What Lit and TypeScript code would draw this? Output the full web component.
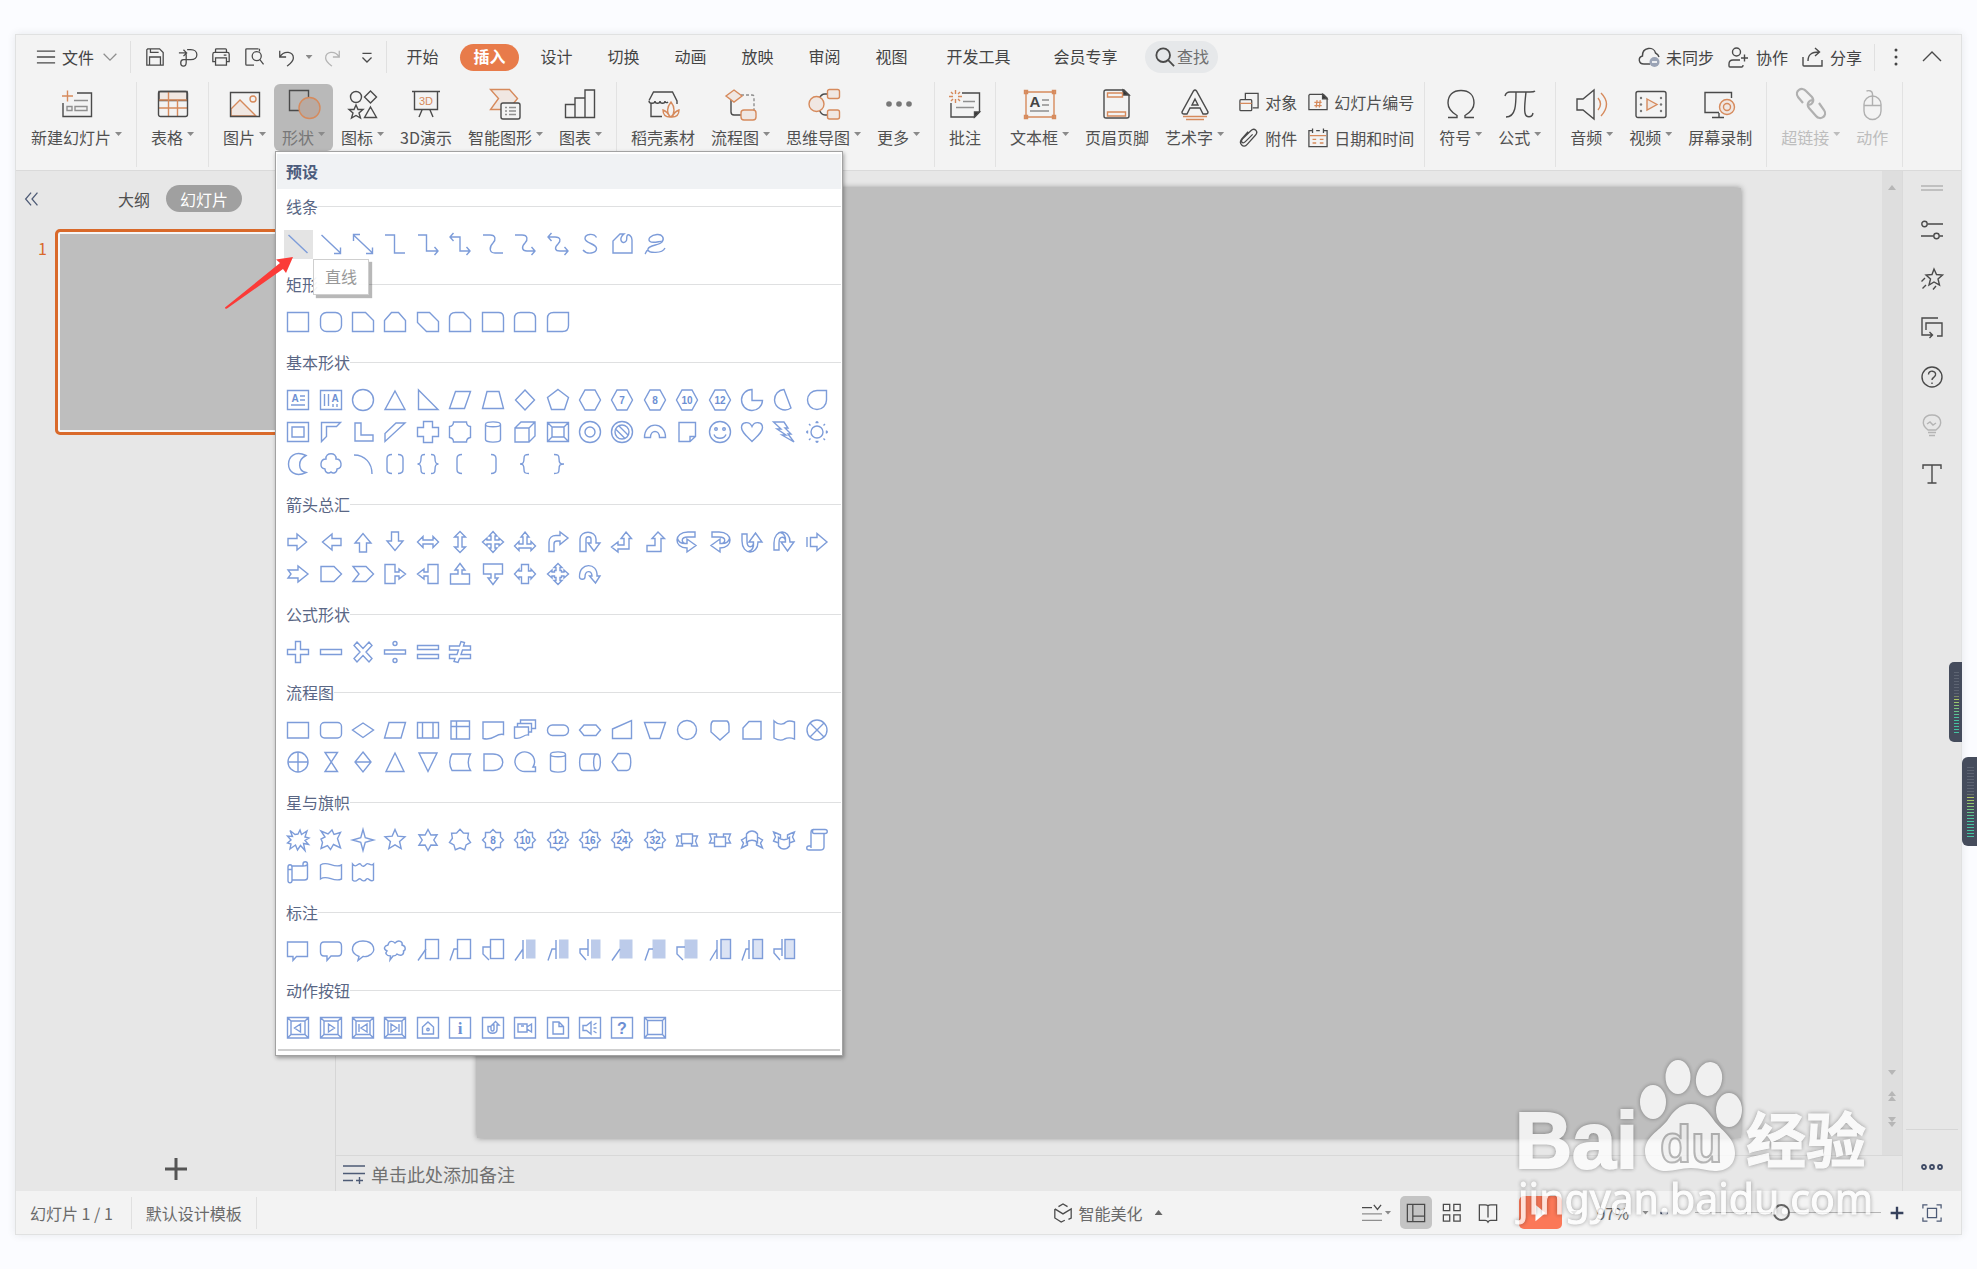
import { LitElement, html, svg, css, nothing } from "lit";
import type { TemplateResult, SVGTemplateResult } from "lit";
import { customElement, property } from "lit/decorators.js";
import { classMap } from "lit/directives/class-map.js";

type Art = SVGTemplateResult;

/* ---------- shape gallery drawings, on a 24 unit grid ---------- */

const p = (d: string): Art => svg`<path d=${d}></path>`;
const turn = (d: string, deg: number): Art => svg`<path d=${d} transform=${`rotate(${deg} 12 12)`}></path>`;
const via = (d: string, transform: string): Art => svg`<path d=${d} transform=${transform}></path>`;
const num = (d: string, n: string): Art =>
  svg`<path d=${d}></path><text x="12" y="15.5" text-anchor="middle" font-size="10">${n}</text>`;

const BOX = "M1.5 2.5h21v19h-21z";
const HEX = "M7 2h10l5.5 10L17 22H7L1.5 12z";
const BADGE = "M12 1.5l3 3h4.5v4.5l3 3-3 3v4.5H15l-3 3-3-3H4.5V15l-3-3 3-3V4.5H9z";
const ARROW = "M2 8.5h9V4l9.5 8L11 20v-4.5H2z";
const DOUBLE = "M1.5 12L7 6.5V10h10V6.5l5.5 5.5-5.5 5.5V14H7v3.5z";
const HOOK = "M20 2h-7C-1.5 2-1.5 18 12 18v4l9-6.5L12 9v4.5C6 13.500 5 7 13 7h7zM2.500 8.500c1 3.500 4.500 5.500 9.500 5";
const CAN = "M4.5 4.5C4.5 1 19.5 1 19.5 4.5v15c0 3.5-15 3.5-15 0zM4.5 4.5c0 3 15 3 15 0";
const CALL_ARROW = "M2 2.5h10V10h4V7l6.5 5-6.5 5v-3h-4v7.5H2z";
const BUTTON = "M1.5 1.5h21V22h-21z";
const BEVEL = "M1.5 1.5h21V22h-21zM5 5h14v13.5H5zM1.5 1.5L5 5M22.5 1.5L19 5M1.5 22L5 18.5M22.5 22L19 18.5";

const star = (n: number, outer: number, inner: number): string => {
  const pts: string[] = [];
  for (let i = 0; i < n * 2; i++) {
    const r = i % 2 ? inner : outer;
    const a = (Math.PI * i) / n - Math.PI / 2;
    pts.push(`${(12 + r * Math.cos(a)).toFixed(2)} ${(12 + r * Math.sin(a)).toFixed(2)}`);
  }
  return `M${pts.join("L")}z`;
};

const circle = (r: number, cx = 12, cy = 12): Art => svg`<circle cx=${cx} cy=${cy} r=${r}></circle>`;

const callout = (lead: string, x: number, kind: "box" | "fill" | "both", bar = ""): Art => svg`
  <rect class=${kind} x=${x} y="1.5" width=${22.5 - x} height="19"></rect>
  <path d=${lead + bar}></path>`;

interface Section { title: string; shapes: Art[] }

const SECTIONS: Section[] = [
  {
    title: "线条",
    shapes: [
      p("M2.5 3l19 18"),
      p("M2.5 3l19 18M15 21.5h6.5v-6"),
      p("M2.5 3l19 18M15 21.5h6.5v-6M2.5 9V2.5H9"),
      p("M2 3h9.500v18H22"),
      p("M2 3h8.5v16H22M18.5 15l3.5 4-3.5 4"),
      p("M2 5h10v14h10M18.5 15l3.5 4-3.5 4M5.5 1L2 5l3.5 4"),
      p("M2 3h7c6 0 6 5 3 8-4 4-4 10 2 10h8"),
      p("M2 3h7c6 0 6 5 3 8-4 4-3 8 2 8h8M18.5 15l3.5 4-3.5 4"),
      p("M2 5h7c6 0 6 4 3 7-4 4-3 7 2 7h8M18.5 15l3.5 4-3.5 4M5.5 1L2 5l3.5 4"),
      p("M18.5 5.5C16 1 7 1.5 7 6.5c0 5 11.5 5 11.5 10S9 23 5 18"),
      p("M3 21V9l7-7h4c-6 5-2 10 1 8 3-1 1-3 2-6 1-3 5 0 5 4v13z"),
      p("M19 10c3-4 0-8-5-7.500C8 3 4 7 7 9.5s13-1.500 12 .500c-2 3.500-15 3-14 8 1 3 14 4 17-2M5 18c-2 1-2 3-3 4"),
    ],
  },
  {
    title: "矩形",
    shapes: [
      p(BOX),
      svg`<rect x="1.5" y="2.5" width="21" height="19" rx="6"></rect>`,
      p("M1.5 2.5h13l8 8v11h-21z"),
      p("M1.5 21.5v-11l7-8h7l7 8v11z"),
      p("M1.5 2.5h12l9 9v10h-12l-9-9z"),
      p("M1.5 21.5v-13q0-6 6-6h8l7 7v12z"),
      p("M1.5 2.5h16q5 0 5 5v14h-21z"),
      p("M1.5 21.5v-13q0-6 6-6h9q6 0 6 6v13z"),
      p("M1.5 21.5v-13q0-6 6-6h15v13q0 6-6 6z"),
    ],
  },
  {
    title: "基本形状",
    shapes: [
      svg`<path d="M1.5 2.5h21v19h-21zM14 8h5M14 12h5M5 17h14"></path><text x="9" y="14" text-anchor="middle" font-size="10">A</text>`,
      svg`<path d="M1.5 2.5h21v19h-21zM5.5 6v12M9.5 6v12M14 16v3M18 16v3"></path><text x="16" y="14" text-anchor="middle" font-size="10">A</text>`,
      circle(10.5),
      p("M12 3l10 18.5H2z"),
      p("M2.5 2v19.5H22z"),
      p("M7.5 3.5h15l-6 17h-15z"),
      p("M6 3.5h12l4.5 17h-21z"),
      p("M12 2l9.5 10-9.5 10L2.500 12z"),
      p("M12 1.5l10.5 8-4 12h-13l-4-12z"),
      p(HEX),
      num(HEX, "7"),
      num(HEX, "8"),
      num(HEX, "10"),
      num(HEX, "12"),
      p("M12 1.5A10.5 10.5 0 1 0 22.5 12.5H12z"),
      p("M12 1.5l7 18.5A10.5 10.5 0 0 1 2.5 12C2.5 6 6.5 2 12 1.5z"),
      p("M21.5 2.5H12A9.5 9.5 0 1 0 21.5 12z"),
      p("M1.5 2.5h21v19h-21zM6 7h12v10H6z"),
      p("M2.5 2.5h19l-4 4h-10v10l-5 5z"),
      p("M4 3h6v12h12v6H4z"),
      p("M2 21.5v-8L13 3h9z"),
      p("M7.5 1.5h9v6h6v9h-6v6h-9v-6h-6v-9h6z"),
      p("M5.5 2h13q0 4 4 4.5v11q-4 .5-4 4.5h-13q0-4-4-4.5v-11q4-.5 4-4.5z"),
      p(CAN),
      p("M2 8h14v14H2zM2 8l6-6h14v14l-6 6M16 8l6-6"),
      p("M1.5 2.5h21v19h-21zM6 7h12v10H6zM1.5 2.5L6 7M22.5 2.5L18 7M1.5 21.5L6 17M22.5 21.5L18 17"),
      svg`${circle(10.5)}${circle(5)}`,
      svg`${circle(10.5)}${circle(7)}<path d="M6 9.5l9 9M9 6l9 9"></path>`,
      p("M1.5 17.5C1.500 1 22.5 1 22.5 17.5h-6c0-8-9-8-9 0z"),
      p("M4 2.5h16.5v14l-5.5 5H4zM15 21.5v-5h5.5"),
      svg`${circle(10.5)}${circle(1.3, 8, 9)}${circle(1.3, 16, 9)}<path d="M6 14.5c2 5 10 5 12 0"></path>`,
      p("M12 21.5C6 15.5 1.5 12 1.5 7.5c0-6 8-6.5 10.5-1 2.5-5.5 10.5-5 10.5 1 0 4.5-4.5 8-10.5 14z"),
      p("M1.500 2H12l4 6h-3l6 6h-3l6 8-12-7h4L5 9h4z"),
      svg`${circle(6)}<path d="M12 1v2M12 21v2M1 12h2M21 12h2M4 4l1.5 1.5M18.5 18.5L20 20M4 20l1.5-1.5M18.5 5.5L20 4M10.5 2.5h3M10.5 21.5h3M2.5 10.5v3M21.500 10.5v3"></path>`,
      p("M20 3.5C9-2 2.5 5 2.5 12S9 26 20 20.5C12 19 11 8 20 3.5z"),
      p("M7 7C6 0 18 0 17 7c6 0 7 9 1 10 0 4-4 5-6 3-2 2-6 1-6-3-6-1-5-10 1-10z"),
      p("M3 3c11 0 18 8 18 19"),
      p("M9 2.5c-3 0-5 .5-5 4v11c0 3.5 2 4 5 4M15 2.5c3 0 5 .5 5 4v11c0 3.5-2 4-5 4"),
      p("M9 2.5c-3 0-4 .5-4 4C5 11 4 12 1.5 12 4 12 5 13 5 17.5c0 3.5 1 4 4 4M15 2.5c3 0 4 .5 4 4 0 4.5 1 5.5 3.5 5.5-2.5 0-3.5 1-3.5 5.500 0 3.5-1 4-4 4"),
      p("M14 2.5c-3 0-5 .5-5 4v11c0 3.5 2 4 5 4"),
      p("M10 2.5c3 0 5 .5 5 4v11c0 3.5-2 4-5 4"),
      p("M16 2.5c-4 0-5 .5-5 4C11 11 10 12 7 12c3 0 4 1 4 5.5 0 3.5 1 4 5 4"),
      p("M8 2.5c4 0 5 .5 5 4 0 4.5 1 5.5 5 5.5-4 0-5 1-5 5.5 0 3.5-1 4-5 4"),
    ],
  },
  {
    title: "箭头总汇",
    shapes: [
      turn(ARROW, 0),
      turn(ARROW, 180),
      turn(ARROW, 270),
      turn(ARROW, 90),
      p(DOUBLE),
      turn(DOUBLE, 90),
      p("M12 1.5L16 6h-2v4h4V8l4.5 4-4.5 4v-2h-4v4h2l-4 4.5L8 18h2v-4H6v2l-4.5-4L6 8v2h4V6H8z"),
      p("M12 2l4 5h-2v7h4v-2.5l4.5 4.5-4.5 4.5V18H6v2.5L1.500 16 6 11.5V14h4V7H8z"),
      p("M3 21.5V12c0-4 3-6.5 7-6.5h4V2l8 6-8 6.5V11h-3c-2 0-3 1-3 3v7.5z"),
      p("M2 21.5V9C2 0 18 0 18 9v4h4l-6 8-6-8h3V9c0-3-5-3-5 0v12.5z"),
      p("M16 2l5.5 6.5H19V19H8v3l-6.5-5L8 12v3h6V8.5h-3z"),
      p("M15 2l6.5 6.5H18v13H4v-6h8v-7H9z"),
      p(HOOK),
      via(HOOK, "matrix(-1 0 0 1 24 0)"),
      turn(HOOK, 270),
      via(HOOK, "matrix(1 0 0 -1 0 24) rotate(270 12 12)"),
      p("M2 7v10M5.5 7.5H12v-4l10 8.5-10 8.5v-4H5.5z"),
      p("M2 8h10V4l10 8-10 8v-4H2l3-4z"),
      p("M2 4.5h13l7.5 7.5-7.5 7.500H2z"),
      p("M2 4.5h13l7.5 7.5-7.5 7.5H2L8 12z"),
      p(CALL_ARROW),
      turn(CALL_ARROW, 180),
      turn(CALL_ARROW, 270),
      turn(CALL_ARROW, 90),
      p("M8.5 2.5h7V9H18V7l4.5 5-4.5 5v-2h-2.500v6.5h-7V15H6v2l-4.5-5L6 7v2h2.500z"),
      p("M12 1.5l4 4h-2v3h1.5V10H18V8l4.5 4-4.5 4v-2h-2.5v1.5H14v3h2l-4 4-4-4h2v-3H8.5V14H6v2l-4.5-4L6 8v2h2.5V8.5H10v-3H8z"),
      p("M1.5 15C1 0 20 0 19 14h3l-4.5 7-6-7H14c0-6-7-6-7 1 0 3-5.5 3-5.5 0z"),
    ],
  },
  {
    title: "公式形状",
    shapes: [
      p("M9.5 1.5h5v8h8v5h-8v8h-5v-8h-8v-5h8z"),
      p("M1.5 9.5h21v5h-21z"),
      p("M6 2l6 6.5L18 2l3 3.5-6 6.5 6 6.5-3 3.5-6-6.5L6 22l-3-3.5L9 12 3 5.5z"),
      svg`<path d="M1.5 10h21v4h-21z"></path>${circle(2, 12, 3.5)}${circle(2, 12, 20.5)}`,
      p("M1.5 5.5h21v4h-21zM1.5 14.5h21v4h-21z"),
      p("M1.5 6h10L13 1.5l3.5 1-1 3.500h7v4h-8L13 14.5h9.5v4h-11l-1.5 4-4-1 1-3H1.5v-4H9L10.500 10h-9z"),
    ],
  },
  {
    title: "流程图",
    shapes: [
      p("M1.5 4.5h21V20h-21z"),
      svg`<rect x="1.5" y="4.5" width="21" height="15.5" rx="4"></rect>`,
      p("M12 5l10.5 7L12 19.5 1.5 12z"),
      p("M6 4.5h16.5L18 20H1.5z"),
      p("M1.5 4.5h21V20h-21zM6.5 4.5V20M17 4.5V20"),
      p("M3 3h18.5v18H3zM8.5 3v18M3 8.5h18.5"),
      p("M2 4h20.5v12.5c-8-2-9 7-20.5 4z"),
      p("M1.5 9h14v8c-5-1-7 5-14 3zM4.5 9V5.5h14V14h-3M7.5 5.5V2h15v8.5h-4"),
      svg`<rect x="1.5" y="7" width="21" height="10.5" rx="5"></rect>`,
      p("M6 7h12l4.5 5-4.5 5.5H6L1.5 12z"),
      p("M2.5 11l19-8.5v18h-19z"),
      p("M1.5 4.5h21l-5.500 16H7z"),
      circle(9.5),
      p("M5 3h14q2 1 2 5v6l-9 8-9-8V8q0-4 2-5z"),
      p("M9 3.500h12V21H3V10z"),
      p("M2 3c4 4 10 4 12 1 3-2 6-1 8.5 0v17c-5-2-8-1-10 0-3 2-7 1-10.5-1z"),
      svg`${circle(10)}<path d="M5 5l14 14M19 5L5 19"></path>`,
      svg`${circle(10)}<path d="M12 2v20M2 12h20"></path>`,
      p("M6 2.5h12.5l-12.5 19h12.5z"),
      p("M12 2l8 10-8 10-8-10zM4 12h16"),
      p("M12 3l9 18.5H3z"),
      p("M3 3h18l-9 18.5z"),
      p("M4 4h18.5c-3 5-3 12 0 16.5H4c-3-5-3-12 0-16.5z"),
      p("M3 4h9c13 0 13 16.5 0 16.5H3z"),
      p("M22.5 21.5H12A9.8 9.8 0 1 1 20 17h2.5z"),
      p(CAN),
      p("M5 4h14c4.5 0 4.5 16.5 0 16.5H5C.5 20.5.5 4 5 4zM19 4c-4.5 0-4.5 16.5 0 16.5"),
      p("M8 3.5h9c5 0 5 17 0 17H8L2 12z"),
    ],
  },
  {
    title: "星与旗帜",
    shapes: [
      p("M12 6l2-4 1.5 4.5L21 3l-2 6 4 1-4 2.5 3.5 4-5-1 1.5 7-4.5-5-3 4.5-2-5L4 21l1-5-3.5-1L5 12 1.5 8l5 .5L4 2.5l5 4z"),
      p("M9 6l4-4 2 4.5 6.5-2-3 6 3 9.500-7-3.500-3 5-3-4-6.500 3 1.500-6L2 11l4-2-4-6z"),
      p(star(4, 10.5, 3.2)),
      p(star(5, 10.5, 4.8)),
      p(star(6, 10.5, 5.8)),
      p(star(7, 10.8, 7.8)),
      ...["8", "10", "12", "16", "24", "32"].map((n) => num(BADGE, n)),
      p("M6.5 6h11v9.5h-11zM6.5 8h-5l2 5-2 5h6v-2.5M17.5 8h5l-2 5 2 5h-6v-2.5"),
      p("M6.500 9h11v9.5h-11zM6.5 15h-5l2-4-2-5h7v3M17.5 15h5l-2-4 2-5h-7v3"),
      p("M6.5 6c3-4 8-4 11 0v8.5c-3-3-8-3-11 0zM6.5 9c-2 1-3 2-5 3l2 3-2 5c2-1 4-2 6-3v-2.5M17.5 9c2 1 3 2 5 3l-2 3 2 5c-2-1-4-2-6-3v-2.5"),
      p("M6.5 18c3 4 8 4 11 0V9.5c-3 3-8 3-11 0zM6.5 15c-2-1-3-1-5-2l2-4-2-5c3 1 5 2 7 3v3M17.500 15c2-1 3-1 5-2l-2-4 2-5c-3 1-5 2-7 3v3"),
      p("M6 16.5V4c0-3 3-2.5 5-2.5h9c3 0 3 4 0 4h-1V19c0 3-2 3-4 3H4c-3 0-3-4 0-4h2v-1.5M19 5.5H9c-2 0-2-4 0-4M6 18v2"),
      p("M6 6h11V4c0-3 4.5-3 4.5 0v13.5c0 2-1 2.5-3 2.5H6v.5c0 3-4 3-4 0V7c0-3 4-3 4 0v13M17 6c2 0 4 0 4.5-2M2 9.5h4"),
      p("M1.5 5c7-5 13 4 21 0v14c-8 4-14-5-21 0z"),
      p("M1.5 4c4 5 6-2 8 0 2 4 4 2 6 0 2-2 4 3 7 0v16c-3 3-5-3-7-1-2 3-4 2-6 0-2-2-4 5-8 1z"),
    ],
  },
  {
    title: "标注",
    shapes: [
      p("M1.5 4h20v14.5h-11l-3.5 4v-4H1.5z"),
      p("M5 4h14q3.5 0 3.5 4v6q0 4-3.5 4h-7l-4 4.5V18H5q-3.5 0-3.5-4V8q0-4 3.5-4z"),
      p("M8 18.5C-3 14 1 3 12 3s15 11 5 15c-3 1-4 .5-5 .5l-5 4z"),
      p("M5 7C6 2 10 3 12 5c4-4 8-1 7 2 4 1 4 5 1.5 6 1 5-4 5-6.5 3-1 2-3 2-4 2l-3 4 .5-4C3 18 2 15 4 13 0 11 1 8 5 7z"),
      callout("M2 22.5L10 11", 9.5, "box"),
      callout("M2 22.5L6 11h4", 9.5, "box"),
      callout("M10 9H2v7l6 6", 9.5, "box"),
      callout("M2 22.5L10 11", 13, "fill", "M10 2v19"),
      callout("M2 22.5L6 11h4", 13, "fill", "M10 2v19"),
      callout("M10 11H2v4l6 7", 13, "fill", "M10 1v17"),
      callout("M2 22.5L10 11", 9.5, "fill"),
      callout("M2 22.5L6 11h4", 9.5, "fill"),
      callout("M10 9H2v7l6 6", 9.5, "fill"),
      callout("M2 22.5L9 11", 13, "both", "M9 2v19"),
      callout("M2 22.5L6 11h3", 13, "both", "M9 2v19"),
      callout("M10 11H2v4l6 7", 13, "both", "M10 1v17"),
    ],
  },
  {
    title: "动作按钮",
    shapes: [
      p(BEVEL + "M14.5 8v8l-6-4z"),
      p(BEVEL + "M9.5 8v8l6-4z"),
      p(BEVEL + "M16 8v8l-6-4zM8 8v8"),
      p(BEVEL + "M8 8v8l6-4zM16 8v8"),
      svg`<path d=${BUTTON + "M12 6l5.5 5v7h-11v-7z"}></path>${circle(1.2, 12, 13.5)}`,
      svg`<path d=${BUTTON}></path><text class="serif" x="12" y="18" text-anchor="middle" font-size="17">i</text>`,
      p(BUTTON + "M7 10.5v3c0 5 9 5 9 0V9h2l-3.5-3.500L11 9h2v4.5c0 2-3 2-3 0v-3z"),
      p(BUTTON + "M5 8h9v8H5zM8 10h3M14 11l4.5-3v8L14 13"),
      p(BUTTON + "M7 6h6l4.5 4.5V18H7zM13 6v4.5h4.5"),
      p(BUTTON + "M5 9.500h3.5L13 6v12l-4.5-3.5H5zM15.5 9l3-2M15.5 12h3M15.5 15l3 2"),
      svg`<path d=${BUTTON}></path><text x="12" y="18" text-anchor="middle" font-size="16">?</text>`,
      p(BUTTON + "M4.5 4.5h15v14h-15zM1.5 1.5l3 3M22.5 1.5l-3 3M1.5 22l3-3.5M22.5 22l-3-3.5"),
    ],
  },
];

/* ---------- ribbon drawings, on a 32 unit grid ---------- */

const RIBBON: Record<string, Art> = {
  newSlide: svg`<path d="M16 5h14.5v23.5H2V17M2 15v3"></path><path class="o" d="M1 8h11M6.5 2.5v11"></path><path class="g" d="M13 12.5h14M6 18.5h5v4H6zM14 18.5h12v4H14z"></path>`,
  table: svg`<path class="tint" d="M2 3.5h28v9H2z"></path><path class="o" d="M2 12h28M2 20h28M11.5 3.5v25M20.5 12v16.5"></path><rect x="1.5" y="3.5" width="29" height="25" rx="2"></rect>`,
  picture: svg`<path class="o tint" d="M2 21l9-9 16 16H2z"></path><circle class="o" cx="24" cy="11" r="3"></circle><path d="M1.5 4.5h29v24h-29z"></path>`,
  shapes: svg`<path d="M20.5 10V2.5h-19v20h11"></path><circle class="o shade" cx="21.5" cy="20" r="10.5"></circle>`,
  icons: svg`<circle cx="9" cy="9" r="5.5"></circle><path d="M23.5 3l6 6-6 6-6-6zM23.5 19l6 10.5h-12zM9 17l2 4.5h5L12 25l1.5 5L9 27.5 4.5 30 6 25l-4-3.5h5z"></path>`,
  deck: svg`<path d="M2 3.5h28M4.5 3.5v18h23v-18M12 22l-3 7M20 22l3 7"></path><text class="ot" x="16" y="17" text-anchor="middle" font-size="11">3D</text>`,
  smart: svg`<path class="o tint" d="M1.5 1.5h19l8 9-9 11h-18l8-11z"></path><rect class="base" x="12" y="15" width="19" height="16" rx="2"></rect><path class="g" d="M16 19.5h2M16 23h2M16 26.5h2M20 19.5h7M20 23h7M20 26.5h7"></path>`,
  chart: svg`<path d="M1.5 16.5H11v13H1.5zM11 10h10v19.5H11zM21 2h9.5v27.5H21z"></path>`,
  store: svg`<path d="M15 28.5H4V15M2 12.5L6.5 4h19l4.5 9v3M2 13c0 3 6 3 6 0 0 3 5 3 5 0 0 3 5 3 5 0 0 2 2 2 3 1"></path><path class="o" d="M24 29c-5-4-4-10 0-15 4 5 4 11 0 15zM23 29c-5 0-7-3-7-7 3 1 5 3 7 7zM25 29c5 0 7-3 7-7-3 1-5 3-7 7z"></path>`,
  flow: svg`<path d="M6 10v14q0 3 3 3h7"></path><path class="g" stroke-dasharray="3 2" d="M16 7h11q2 0 2 2v13"></path><path class="o tint" d="M9 2l8 6-8 6-8-6z"></path><rect class="o tint" x="16" y="22" width="15" height="10" rx="3"></rect>`,
  mind: svg`<path d="M11 11q2-5 6-5h3M11 21q2 6 6 6h3"></path><circle class="o tint" cx="8.5" cy="16" r="7.5"></circle><rect class="o tint" x="19.5" y="1.5" width="12" height="9" rx="2"></rect><rect class="o tint" x="19.5" y="22" width="12" height="9" rx="2"></rect>`,
  more: svg`<g class="dots"><circle cx="6" cy="16" r="2.8"></circle><circle cx="16" cy="16" r="2.8"></circle><circle cx="26" cy="16" r="2.8"></circle></g>`,
  note: svg`<path d="M13 5h17.500v19l-5 5H2V15"></path><path class="solid" d="M30.5 24h-5v5z"></path><path class="o" d="M6.5 2v4M6.5 11v4M0 8.5h4M9 8.5h4M2 4l2 2M9 11l2 2M2 13l2-2M9 6l2-2"></path><path class="g" d="M14 13.5h12M7 19.5h18"></path>`,
  textbox: svg`<path class="o" d="M2 4h28v25H2zM.5 2.5h3v3h-3zM28.5 2.5h3v3h-3zM.5 27.5h3v3h-3zM28.5 27.5h3v3h-3z"></path><text class="kt" x="11" y="19" text-anchor="middle" font-size="15">A</text><path class="g" d="M18 12h7M18 17h7M6 23h19"></path>`,
  headfoot: svg`<path d="M3 4q0-2 2-2h18l5 5v21q0 2-2 2H5q-2 0-2-2z"></path><path class="solid" d="M22 2v5h6z"></path><path class="o" d="M6.5 5h15v4h-15zM6.5 24h18v4h-18z"></path>`,
  wordart: svg`<path d="M14.5 3q1.5-2 3 0L29 24q0 2-2 2h-3l-3-6H11l-3 6H5q-2 0-2-2zM16 11l-3 6h6z"></path><path class="o" d="M4 28.5h24M7 31.5h18"></path>`,
  omega: svg`<path d="M3 29.5h9v-2C6 24 3 20 3 15 3 7 8 2.5 16 2.5S29 7 29 15c0 5-3 9-9 12.5v2h9"></path>`,
  pi: svg`<path d="M1 8q1-4 5-4h20q4 0 5-1M12 4c0 12 0 25-10 25M22 4c-1 9-2 17-1 21 1 5 7 5 8 0"></path>`,
  audio: svg`<path d="M1 11h6L18 2v29l-11-9H1z"></path><path class="o" d="M22 10q5 6 0 12M25 5q11 11 0 23"></path>`,
  video: svg`<rect x="1" y="3.5" width="30" height="26" rx="2"></rect><path class="o tint" d="M12 11l10 5.5L12 22z"></path><g class="dots"><circle cx="6" cy="10" r="1.2"></circle><circle cx="6" cy="16.5" r="1.2"></circle><circle cx="6" cy="23" r="1.2"></circle><circle cx="26" cy="10" r="1.2"></circle><circle cx="26" cy="16.5" r="1.2"></circle><circle cx="26" cy="23" r="1.2"></circle></g>`,
  record: svg`<path d="M27.5 10V4.500H1v20h14M15 25v4M8 29.5h12"></path><circle class="o tint" cx="23" cy="19" r="7.5"></circle><circle class="o" cx="23" cy="19" r="3.5"></circle>`,
  link: svg`<path class="thick" d="M8 15L3 9C-1 3 7-2 11 3l6 6c3 4 0 8-4 8M24 15l5 7c4 6-4 11-8 6l-7-8c-3-4 0-8 4-8"></path>`,
  mouse: svg`<rect x="8" y="8" width="17" height="23.5" rx="8.5"></rect><path d="M8 17.5h17M16.5 17.5V6c0-3-3-4-6-3"></path>`,
};

interface Tool { icon: string; label: string; caret?: boolean; off?: boolean; on?: boolean }

const GROUPS: Tool[][] = [
  [{ icon: "newSlide", label: "新建幻灯片", caret: true }],
  [{ icon: "table", label: "表格", caret: true }],
  [
    { icon: "picture", label: "图片", caret: true },
    { icon: "shapes", label: "形状", caret: true, on: true },
    { icon: "icons", label: "图标", caret: true },
    { icon: "deck", label: "3D演示" },
    { icon: "smart", label: "智能图形", caret: true },
    { icon: "chart", label: "图表", caret: true },
  ],
  [
    { icon: "store", label: "稻壳素材" },
    { icon: "flow", label: "流程图", caret: true },
    { icon: "mind", label: "思维导图", caret: true },
    { icon: "more", label: "更多", caret: true },
  ],
  [{ icon: "note", label: "批注" }],
  [
    { icon: "textbox", label: "文本框", caret: true },
    { icon: "headfoot", label: "页眉页脚" },
    { icon: "wordart", label: "艺术字", caret: true },
  ],
  [
    { icon: "omega", label: "符号", caret: true },
    { icon: "pi", label: "公式", caret: true },
  ],
  [
    { icon: "audio", label: "音频", caret: true },
    { icon: "video", label: "视频", caret: true },
    { icon: "record", label: "屏幕录制" },
  ],
  [
    { icon: "link", label: "超链接", caret: true, off: true },
    { icon: "mouse", label: "动作", off: true },
  ],
];

/* ---------- small drawings, on a 22 unit grid ---------- */

const SMALL: Record<string, Art> = {
  menu: svg`<path d="M1 4.5h20M1 11h20M1 17.5h20"></path>`,
  down: svg`<path class="mid" d="M4 7.5l7 7 7-7"></path>`,
  save: svg`<path d="M3 2h13l4 4v14H2V3zM5 20v-9h12v9M6 2v4h9"></path>`,
  pdf: svg`<path d="M1 6.5h8M6 3l3.5 3.5L6 10M10 3h4c9 0 9 11 0 11H6c-4 0-4 7 0 7 3 0 3-2 3-4V8"></path>`,
  print: svg`<path d="M5 6V3q0-1 1-1h10q1 0 1 1v3M5 16H2V8q0-2 2-2h14q2 0 2 2v8h-3M5 12h12v8H5zM14 9h3"></path>`,
  preview: svg`<path d="M16 2H3q-1 0-1 1v16q0 1 1 1h8"></path><circle cx="14" cy="10" r="5"></circle><path d="M17.5 14l4 5M17 2v3"></path>`,
  undo: svg`<path d="M3 4v7h7M3 11C8 3 18 5 18 12c0 4-3 6-7 9"></path>`,
  redo: svg`<path class="soft" d="M19 4v7h-7M19 11C14 3 4 5 4 12c0 4 3 6 7 9"></path>`,
  custom: svg`<path d="M6 7h10M6 11.5l5 5 5-5"></path>`,
  find: svg`<circle class="bold" cx="9" cy="9" r="7.5"></circle><path class="bold" d="M14.5 14.5L21 21"></path>`,
  cloud: svg`<path d="M12 18H6C0 18 0 11 4.5 10 4 1 16 0 17.5 7c2 1 3 2 3.500 4"></path><circle class="badge" cx="16.5" cy="16" r="5"></circle><path class="white" d="M14 16h5"></path>`,
  people: svg`<circle cx="8.5" cy="6" r="4"></circle><path d="M12 14H5q-4 0-4 4v2q0 1 1 1h12q1 0 1-2M13 12h7M16.5 8.5v7"></path>`,
  share: svg`<path d="M1 11v8q0 1 1 1h18v-6M6 15C6 8 10 6 17 6M13 2l4.5 4-4.5 4"></path>`,
  kebab: svg`<g class="fill"><circle cx="11" cy="4" r="1.5"></circle><circle cx="11" cy="11" r="1.5"></circle><circle cx="11" cy="18" r="1.5"></circle></g>`,
  up: svg`<path d="M2 15l9-9 9 9"></path>`,
  object: svg`<path d="M7 8V1.5h14v16h-6"></path><rect x="1" y="8.5" width="13" height="12" rx="1"></rect><path class="o" d="M1 12.5h13"></path>`,
  clip: svg`<path d="M15 7l-8 8c-3 3-6 0-3-3l9-9c4-4 9 1 5 5L9 18c-4 5-10-1-6-6l7-8"></path>`,
  number: svg`<path d="M2 2.5h15l4 4v13H1v-16z"></path><path class="solid" d="M16 2.5v5h5z"></path><path class="o" d="M7 11.5h8M7 15h8M10 9l-1 8M13.5 9l-1 8"></path>`,
  date: svg`<path d="M5 3H1v17.5h20V3h-4M5 .5v5M17 .5v5M9 3h4"></path><path class="o" d="M2 8.5h18M5 12.5h4M13 12.5h4M5 16.5h4M13 16.5h4"></path>`,
  collapse: svg`<path class="navy" d="M10 4l-6 7 6 7M17 4l-6 7 6 7"></path>`,
  plus: svg`<path class="heavy" d="M11 0v22M0 11h22"></path>`,
  notes: svg`<path class="navy" d="M0 3h22M0 10.5h22M0 17.5h10M13 17.5h7M16.5 14v7"></path>`,
  smartdo: svg`<path d="M6 4l5-3 5 3M2 6.5v10L9 21l4-2M2 6.5l9 5.500 9-5.500v10L17 18"></path>`,
  list: svg`<path d="M0 5h11M13 2l4 5 4-5"></path><path class="mid" d="M0 12h22M0 19h22"></path>`,
  normal: svg`<path d="M1.5 1.5h19v19h-19zM7.5 1.500v19M7.5 14.5h13"></path>`,
  grid: svg`<path d="M1.5 1.5h7v7h-7zM13 1.5h7v7h-7zM1.5 13h7v7h-7zM13 13h7v7h-7z"></path>`,
  book: svg`<path d="M11 3q-1-1-3-1H1.5v17H8q2 0 3 2 1-2 3-2h6.5V2H14q-2 0-3 1v13"></path>`,
  play: svg`<path class="white-fill" d="M6 2l11 9-11 9z"></path>`,
  minus: svg`<path class="deep" d="M7 11h8"></path>`,
  add: svg`<path class="deep" d="M11 4v14M4 11h14"></path>`,
  fit: svg`<path class="navy" d="M1 6V2h5M16 2h5v4M21 16v4h-5M6 20H1v-4M6 6h10v10H6z"></path>`,
  grip: svg`<path class="soft" d="M0 9h22M0 13h22"></path>`,
  sliders: svg`<circle cx="3.5" cy="5" r="2.7"></circle><circle cx="15.5" cy="17" r="2.7"></circle><path d="M6.5 5H22M0 17h12.5M18.5 17H22"></path>`,
  magic: svg`<path d="M13 1l2.5 5.5 6 .5-4.5 4 1.5 6-5.500-3-5 3 1.5-6L5 7l6-.5zM4 10L.5 13.5M5 17l-3.5 3.5M15 18l-3 3.5"></path>`,
  swap: svg`<path d="M17 1H1v17h10M8.5 15l3 3-3 3M5 13V6h16v13h-5"></path>`,
  help: svg`<circle cx="11" cy="11" r="10"></circle><path d="M7.5 8.5c0-5 8-4 7 .5-1 3-3.5 2.5-3.5 5M11 16.5V18"></path>`,
  bulb: svg`<path class="soft" d="M7 15C-1 9 2 0 11 0s12 9 4 15zM7 17.5h8M8 20.5h6M6 9l3-2 3 3 3-2"></path>`,
  text: svg`<path d="M2 5V1h18v4M11 1v18M6.5 19h9"></path>`,
  etc: svg`<g class="rings"><circle cx="3" cy="11" r="2"></circle><circle cx="11" cy="11" r="2"></circle><circle cx="19" cy="11" r="2"></circle></g>`,
};

const small = (name: string): TemplateResult =>
  html`<svg class="small" viewBox="0 0 22 22" aria-hidden="true">${SMALL[name]}</svg>`;

const caret = html`<span class="caret"></span>`;

const base = css`
  :host {
    --ink: #4a4a4a;
    --edge: #e0e1e1;
    --bar: #f3f3f3;
    --canvas: #e7e7e7;
    --orange: #d68a5c;
    box-sizing: border-box;
    font-family: "Noto Sans CJK SC", "Noto Sans", sans-serif;
    font-size: 16px;
    line-height: 24px;
    color: #505050;
  }
  * { box-sizing: border-box; }
  button, input {
    font: inherit;
    color: inherit;
    background: none;
    border: 0;
    padding: 0;
    margin: 0;
  }
  button { display: flex; align-items: center; justify-content: center; white-space: nowrap; }
  svg { display: block; flex: none; fill: none; stroke: var(--ink); stroke-width: 1.4; overflow: visible; }
  .small { width: 20px; height: 20px; }
  .caret {
    flex: none;
    width: 7px;
    height: 4px;
    background: #8a8a8a;
    clip-path: polygon(0 0, 100% 0, 50% 100%);
  }
  .o { stroke: var(--orange); }
  .g, .mid { stroke: #8f8f8f; }
  .soft { stroke: #b4b4b4; }
  .bold { stroke-width: 2; }
  .navy { stroke: #4e5b76; }
  .heavy { stroke-width: 3; stroke: #555; }
  .deep { stroke: #36415c; stroke-width: 2.6; }
  .solid { fill: #333; }
  .tint { fill: #f0e7e2; }
  .shade { fill: #b7aaa3; }
  .base { fill: #f3f3f3; }
  .thick { stroke-width: 2.2; }
  .dots, .fill { fill: #777; stroke: none; }
  .fill { fill: #444; }
  .badge { fill: #9aa3b5; stroke: none; }
  .white { stroke: #fff; stroke-width: 1.6; }
  .white-fill { fill: #fff; stroke: none; }
  .rings { stroke: #3f4b66; stroke-width: 1.8; }
  .ot, .kt { fill: var(--orange); stroke: none; font-family: "Liberation Sans", sans-serif; }
  .kt { fill: #444; font-weight: 700; }
`;

@customElement("shape-menu")
export class ShapeMenu extends LitElement {
  static styles = [
    base,
    css`
      :host {
        display: block;
        width: 568px;
        background: #fff;
        border: 1px solid #a2a2a2;
        padding: 2px 1px 4px;
        box-shadow: 1px 2px 4px rgba(0, 0, 0, 0.35);
      }
      .head {
        margin: 0 0 2px;
        padding: 0 9px;
        font-size: 16px;
        line-height: 35px;
        color: #4c5c7c;
        background: #f0f2f4;
      }
      .section { padding-bottom: 9px; }
      .title {
        display: flex;
        align-items: center;
        margin: 0;
        padding: 0 0 0 9px;
        font-size: 16px;
        font-weight: 400;
        line-height: 30px;
        height: 30px;
        color: #5a6785;
      }
      .title::after { content: ""; flex: 1; height: 1px; background: #dfe0e1; }
      .grid {
        display: grid;
        grid-template-columns: repeat(17, 1fr);
        padding: 7px 8px 0 5px;
      }
      .cell { position: relative; height: 32px; }
      .shape { width: 100%; height: 32px; }
      .shape svg { width: 24px; height: 24px; stroke: #7d9cd9; stroke-width: 1.4; }
      .shape text { fill: #6d8fd3; stroke: none; font-family: "Liberation Sans", sans-serif; font-weight: 700; }
      .shape .serif { font-family: "Liberation Serif", serif; }
      .fill { fill: #bccbea; stroke: none; }
      .both { fill: #dbe3f4; }
      .box { fill: none; }
      .on .shape { background: linear-gradient(#e4e4e4, #e4e4e4) center / 29px 29px no-repeat; }
      .tip {
        position: absolute;
        left: 31px;
        top: 31px;
        z-index: 2;
        width: 56px;
        padding: 4px 0 6px;
        text-align: center;
        color: #999;
        background: rgba(255, 255, 255, 0.92);
        border: 1px solid #cfcfcf;
        box-shadow: 3px 3px 1px rgba(0, 0, 0, 0.28);
      }
      .last { border-top: 2px solid #cfcfcf; margin: -4px 1px 0; }
    `,
  ];

  render() {
    return html`
      <h2 class="head">预设</h2>
      ${SECTIONS.map(
        (s, si) => html`
          <section class="section">
            <h3 class="title">${s.title}</h3>
            <div class="grid">
              ${s.shapes.map((art, i) => {
                const on = si === 0 && i === 0;
                return html`<div class=${classMap({ cell: true, on })}>
                  <button class="shape" aria-label=${on ? "直线" : `${s.title} ${i + 1}`}>
                    <svg viewBox="0 0 24 24" aria-hidden="true">${art}</svg>
                  </button>
                  ${on ? html`<span class="tip" role="tooltip">直线</span>` : nothing}
                </div>`;
              })}
            </div>
          </section>
        `,
      )}
      <div class="last"></div>
    `;
  }
}

@customElement("ribbon-tool")
export class RibbonTool extends LitElement {
  @property({ attribute: false }) tool!: Tool;

  static styles = [
    base,
    css`
      :host { display: block; position: relative; }
      .tool {
        flex-direction: column;
        justify-content: flex-start;
        gap: 5px;
        height: 67px;
        padding: 4px 8px 0;
        border-radius: 6px;
      }
      .art { width: 32px; height: 32px; }
      .label { display: flex; align-items: center; gap: 4px; line-height: 24px; height: 24px; }
      .label .caret { margin-bottom: 6px; }
      .on { background: #b9b9b9; color: #777; }
      .off { color: #bdbdbd; --ink: #b0b0b0; }
      .off .caret { background: #bdbdbd; }
    `,
  ];

  render() {
    const t = this.tool;
    return html`<button class=${classMap({ tool: true, on: !!t.on, off: !!t.off })} ?disabled=${t.off}>
      <svg class="art" viewBox="0 0 32 32" aria-hidden="true">${RIBBON[t.icon]}</svg>
      <span class="label">${t.label}${t.caret ? caret : nothing}</span>
    </button>`;
  }
}

@customElement("site-mark")
export class SiteMark extends LitElement {
  static styles = css`
    :host { display: block; pointer-events: none; }
    .mark { display: block; width: 372px; height: 180px; opacity: 0.78; filter: drop-shadow(0 0 2px rgba(0, 0, 0, 0.45)); overflow: visible; fill: #fff; }
    .name { font: 700 79px "Liberation Sans", sans-serif; stroke: #fff; stroke-width: 2; }
    .cn { font: 700 60px "Noto Sans CJK SC", sans-serif; stroke: #fff; stroke-width: 1; }
    .du { font: 700 51px "Liberation Sans", sans-serif; stroke: #a8a8a8; stroke-width: 2; fill: #f4f4f4; }
    .host { font: 400 41px "Noto Sans", sans-serif; stroke: #fff; stroke-width: 1; }
  `;

  render() {
    return html`<svg class="mark" viewBox="0 0 372 180" role="img" aria-label="Baidu 经验">
      <ellipse cx="141" cy="47" rx="13" ry="17"></ellipse>
      <ellipse cx="166" cy="22" rx="12.5" ry="17"></ellipse>
      <ellipse cx="197" cy="24" rx="13" ry="17" transform="rotate(10 197 24)"></ellipse>
      <ellipse cx="217" cy="55" rx="13" ry="17"></ellipse>
      <path d="M179 49c12 0 17 8 24 18 8 10 20 16 20 31 0 14-11 18-20 18-8 0-14-3-24-3s-16 3-25 3c-12 0-21-8-21-20 0-14 14-20 22-30 6-9 12-17 24-17z"></path>
      <text class="name" x="3" y="113">Bai</text>
      <text class="du" x="148" y="107">du</text>
      <text class="cn" x="234" y="108">经验</text>
      <text class="host" x="6" y="159">jingyan.baidu.com</text>
    </svg>`;
  }
}

@customElement("app-root")
export class AppRoot extends LitElement {
  static styles = [
    base,
    css`
      :host { display: block; position: relative; min-height: 100vh; padding: 34px 15px; background: #fbfcff; overflow: hidden; }
      .window {
        display: flex;
        flex-direction: column;
        min-height: calc(100vh - 68px);
        background: var(--bar);
        border: 1px solid var(--edge);
        box-shadow: 0 0 8px rgba(40, 50, 60, 0.1);
      }
      .title-bar { display: flex; align-items: center; height: 44px; padding: 0 9px 0 20px; color: #444; }
      .rule { flex: none; width: 1px; height: 32px; background: #e0e0e0; }
      .file { gap: 6px; margin-right: 10px; }
      .quick { display: flex; align-items: center; padding: 0 0 0 7px; }
      .quick button { width: 33px; height: 32px; }
      .quick .drop { width: 12px; }
      .quick .wide { width: 38px; }
      .tabs { display: flex; align-items: center; padding: 0 6px 0 2px; }
      .tab { width: 67px; height: 27px; padding-bottom: 2px; border-radius: 14px; }
      .tab.long { width: 107px; }
      .tab.active { width: 59px; margin: 0 4px; color: #fff; font-weight: 700; background: #e87b4a; }
      .search { display: flex; align-items: center; gap: 2px; width: 73px; height: 32px; padding: 0 8px 0 10px; border-radius: 16px; background: #e6e8ea; }
      .search input { width: 33px; min-width: 0; padding-bottom: 2px; outline: none; }
      ::placeholder { color: #707070; opacity: 1; }
      .account { display: flex; align-items: center; gap: 14px; margin-left: auto; }
      .account button { gap: 6px; }
      .account .small { width: 22px; height: 22px; }
      .account .rule { height: 27px; margin: 0 -4px 0 -2px; }
      .account .last { margin: 0 9px 0 0; }
      .ribbon { display: flex; align-items: flex-start; height: 92px; padding: 5px 0 0 7px; border-bottom: 1px solid #dadada; }
      .ribbon .rule { height: 85px; margin: -2px 6px 0; background: #e2e2e2; }
      .group { display: flex; }
      .pairs { display: grid; grid-template-columns: auto auto; column-gap: 11px; padding: 0 4px 0 7px; }
      .pairs button { justify-content: flex-start; gap: 6px; height: 36px; }
      .anchor { position: relative; }
      .menu { position: absolute; left: 1px; top: 67px; z-index: 5; }
      .pointer { position: absolute; left: -51px; top: 171px; z-index: 6; width: 72px; height: 54px; stroke: none; fill: #fb3b38; pointer-events: none; }
      .work { display: flex; flex: 1; background: var(--canvas); }
      .outline { display: flex; flex-direction: column; width: 320px; border-right: 1px solid #d6d6d6; }
      .outline-head { display: flex; align-items: center; padding: 14px 0 0 6px; }
      .outline-head .views { display: flex; align-items: center; gap: 16px; margin-left: 76px; }
      .pill { height: 27px; padding: 0 14px; border-radius: 14px; color: #fff; background: #a0a0a0; }
      .slides { flex: 1; display: flex; align-items: flex-start; gap: 8px; padding: 17px 12px 0 22px; color: #d9692a; }
      .slides .index { padding-top: 7px; }
      .thumb { flex: 1; aspect-ratio: 264 / 203; border: 3px solid #d9692a; border-radius: 5px; background: #bebebe; box-shadow: inset 0 0 0 2px #f6f6f6; }
      .add { align-self: center; width: 40px; height: 40px; margin-bottom: 2px; }
      .editor { display: flex; flex: 1; flex-direction: column; min-width: 0; }
      .stage { display: flex; flex: 1; }
      .slide-area { display: flex; flex: 1; padding: 17px 9%; }
      .slide { flex: 1; background: #bebebe; box-shadow: 0 0 6px rgba(0, 0, 0, 0.4); }
      .scroll { display: flex; flex-direction: column; align-items: center; justify-content: space-between; width: 20px; padding: 14px 0 28px; background: #dedede; }
      .scroll .low { display: flex; flex-direction: column; gap: 16px; align-items: center; }
      .tri { width: 8px; height: 5px; background: #b6b6b6; clip-path: polygon(0 0, 100% 0, 50% 100%); }
      .tri.up { clip-path: polygon(0 100%, 100% 100%, 50% 0); }
      .two { display: flex; flex-direction: column; }
      .notes { display: flex; align-items: center; gap: 6px; height: 36px; padding: 0 0 0 7px; border-top: 1px solid #d8d8d8; font-size: 18px; }
      .notes input { flex: 1; height: 32px; outline: none; }
      .notes .small, .add .small, .rail .small { width: 22px; height: 22px; }
      .rail { display: flex; flex-direction: column; align-items: center; width: 59px; border-left: 1px solid #dadada; }
      .rail button { width: 40px; height: 49px; }
      .rail .grip { height: 34px; }
      .rail .foot { width: 52px; height: 62px; margin-top: auto; padding-top: 12px; border-top: 1px solid #d6d6d6; }
      .status { display: flex; align-items: center; height: 43px; padding: 0 19px 0 14px; color: #6a6a6a; }
      .page { padding-right: 18px; }
      .tpl { padding: 0 14px; }
      .beauty { gap: 6px; }
      .beauty .tri { background: #666; margin-left: 6px; }
      .gap-wide { flex: 4; }
      .gap-narrow { flex: 1; }
      .view-tools { display: flex; align-items: center; }
      .view-tools button { height: 33px; }
      .view-tools .mode { width: 32px; margin: 0 4px 0 0; border-radius: 5px; }
      .view-tools .current { margin-left: 8px; background: #c4c4c4; }
      .view-tools .caret { margin-left: 3px; }
      .view-tools .show { width: 43px; margin: 0 6px 0 11px; border-radius: 5px; background: #fb7858; }
      .view-tools .percent { gap: 10px; margin: 0 4px 0 19px; }
      .step { width: 22px; }
      .zoom { appearance: none; width: 186px; height: 18px; margin: 0 5px 0 20px; background: linear-gradient(#b5b5b5, #b5b5b5) center / 100% 1px no-repeat; }
      .zoom::-webkit-slider-thumb { appearance: none; width: 17px; height: 17px; border: 2px solid #666; border-radius: 50%; background: #f3f3f3; }
      .fit { margin-left: 14px; }
      .mark { position: absolute; right: 93px; bottom: 34px; z-index: 7; }
      .meter { position: absolute; right: 15px; top: 662px; z-index: 8; width: 13px; height: 80px; padding: 10px 3px 8px 5px; border-radius: 5px 0 0 5px; background: #454c5c; }
      .meter.outer { right: 0; top: 757px; height: 89px; width: 15px; border-radius: 6px 0 0 6px; }
      .meter i { display: block; height: 100%; background: repeating-linear-gradient(rgba(69, 76, 92, 0) 0 1px, #454c5c 1px 3px), linear-gradient(#5d6472 0 38%, #b3c65d 42%, #45c3a1 75%); }
    `,
  ];

  private tool(t: Tool) {
    if (!t.on) return html`<ribbon-tool .tool=${t}></ribbon-tool>`;
    return html`<div class="anchor">
      <ribbon-tool .tool=${t}></ribbon-tool>
      <shape-menu class="menu"></shape-menu>
      <svg class="pointer" viewBox="0 0 72 54" aria-hidden="true">
        <path d="M70 2L53 4.500l4 3.500L2 52.500q0 2 2 1L60 14l3 4z"></path>
      </svg>
    </div>`;
  }

  private pair(icon: string, label: string) {
    return html`<button>${small(icon)}${label}</button>`;
  }

  render() {
    const rule = html`<span class="rule"></span>`;
    return html`
      <div class="window">
        <header class="title-bar">
          <button class="file">${small("menu")}文件${small("down")}</button>
          ${rule}
          <div class="quick">
            <button aria-label="保存">${small("save")}</button>
            <button aria-label="输出为PDF">${small("pdf")}</button>
            <button aria-label="打印">${small("print")}</button>
            <button aria-label="打印预览">${small("preview")}</button>
            <button aria-label="撤销">${small("undo")}</button>
            <button class="drop" aria-label="撤销列表">${caret}</button>
            <button aria-label="恢复">${small("redo")}</button>
            <button class="wide" aria-label="自定义">${small("custom")}</button>
          </div>
          ${rule}
          <nav class="tabs">
            ${["开始", "插入", "设计", "切换", "动画", "放映", "审阅", "视图", "开发工具", "会员专享"].map(
              (t) => html`<button class=${classMap({ tab: true, active: t === "插入", long: t.length > 2 })}>${t}</button>`,
            )}
          </nav>
          <label class="search">${small("find")}<input type="text" placeholder="查找" aria-label="查找" /></label>
          <div class="account">
            <button>${small("cloud")}未同步</button>
            <button>${small("people")}协作</button>
            <button>${small("share")}分享</button>
            ${rule}
            <button aria-label="更多选项">${small("kebab")}</button>
            <button class="last" aria-label="收起功能区">${small("up")}</button>
          </div>
        </header>

        <div class="ribbon">
          ${GROUPS.map(
            (g, i) => html`
              <div class="group">
                ${g.map((t) => this.tool(t))}
                ${i === 5
                  ? html`<div class="pairs">
                      ${this.pair("object", "对象")}${this.pair("number", "幻灯片编号")}
                      ${this.pair("clip", "附件")}${this.pair("date", "日期和时间")}
                    </div>`
                  : nothing}
              </div>
              ${rule}
            `,
          )}
        </div>

        <main class="work">
          <aside class="outline">
            <div class="outline-head">
              <button aria-label="收起窗格">${small("collapse")}</button>
              <div class="views"><button>大纲</button><button class="pill">幻灯片</button></div>
            </div>
            <div class="slides"><span class="index">1</span><div class="thumb"></div></div>
            <button class="add" aria-label="新建幻灯片">${small("plus")}</button>
          </aside>
          <section class="editor">
            <div class="stage">
              <div class="slide-area"><div class="slide"></div></div>
              <div class="scroll">
                <span class="tri up"></span>
                <div class="low">
                  <span class="tri"></span>
                  <span class="two"><span class="tri up"></span><span class="tri up"></span></span>
                  <span class="two"><span class="tri"></span><span class="tri"></span></span>
                </div>
              </div>
            </div>
            <label class="notes">${small("notes")}<input type="text" placeholder="单击此处添加备注" aria-label="备注" /></label>
          </section>
          <aside class="rail">
            <button class="grip" aria-label="移动">${small("grip")}</button>
            <button aria-label="属性">${small("sliders")}</button>
            <button aria-label="动画">${small("magic")}</button>
            <button aria-label="切换">${small("swap")}</button>
            <button aria-label="帮助">${small("help")}</button>
            <button aria-label="推荐">${small("bulb")}</button>
            <button aria-label="文字">${small("text")}</button>
            <button class="foot" aria-label="更多">${small("etc")}</button>
          </aside>
        </main>

        <footer class="status">
          <span class="page">幻灯片 1 / 1</span>
          ${rule}
          <span class="tpl">默认设计模板</span>
          ${rule}
          <span class="gap-wide"></span>
          <button class="beauty">${small("smartdo")}智能美化<i class="tri up"></i></button>
          <span class="gap-narrow"></span>
          <div class="view-tools">
            <button aria-label="备注视图">${small("list")}${caret}</button>
            <button class="mode current" aria-label="普通视图">${small("normal")}</button>
            <button class="mode" aria-label="幻灯片浏览">${small("grid")}</button>
            <button class="mode" aria-label="阅读视图">${small("book")}</button>
            <button class="show" aria-label="放映">${small("play")}</button>
            ${caret}
            <button class="percent">97%${caret}</button>
            <button class="step" aria-label="缩小">${small("minus")}</button>
            <input class="zoom" type="range" min="0" max="100" value="46" aria-label="缩放" />
            <button class="step" aria-label="放大">${small("add")}</button>
            <button class="fit" aria-label="适应窗口">${small("fit")}</button>
          </div>
        </footer>
      </div>
      <div class="meter"><i></i></div>
      <div class="meter outer"><i></i></div>
      <site-mark class="mark"></site-mark>
    `;
  }
}
